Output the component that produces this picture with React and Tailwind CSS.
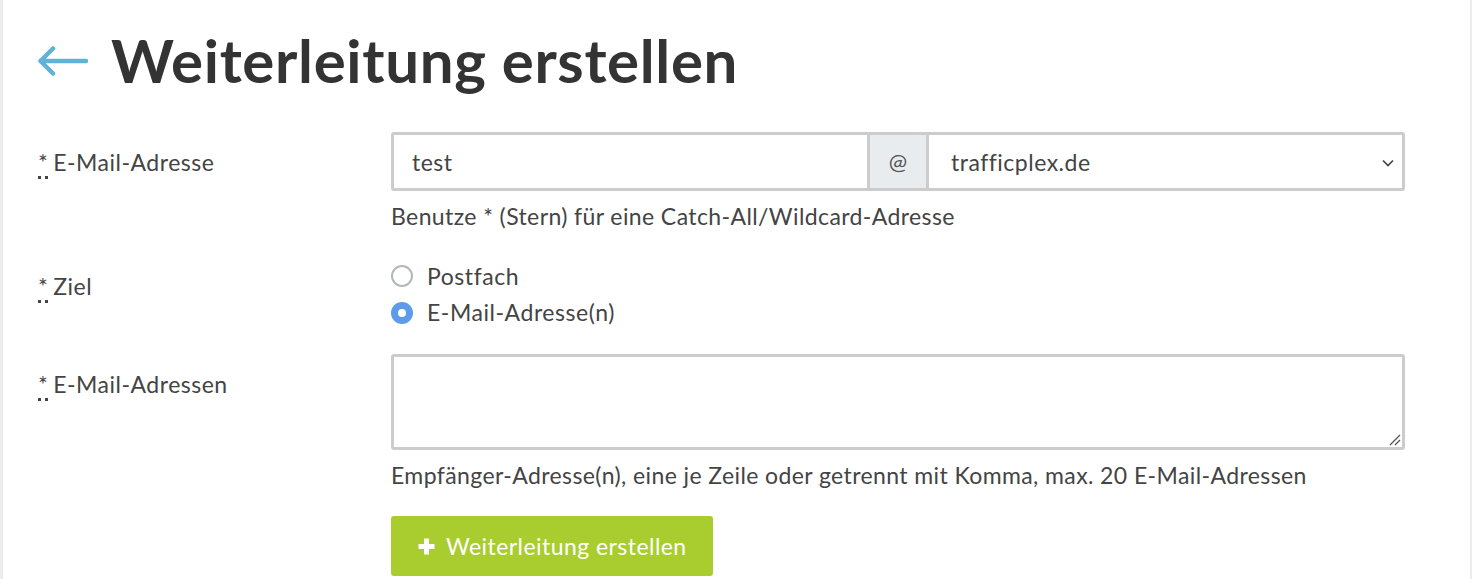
import React from "react";

function Req() {
  return (
    <abbr
      title="Pflichtfeld"
      className="border-b-[3px] border-dotted border-[#444] mr-[5px] leading-none"
      style={{ textDecoration: "none" }}
    >
      *
    </abbr>
  );
}

function Label({ children }) {
  return (
    <div className="w-[353px] shrink-0 pt-[14px] text-[23px] tracking-[0.5px] leading-[33px] text-[#444]">
      <Req />
      {children}
    </div>
  );
}

export default function App() {
  return (
    <div
      className="w-[1472px] h-[579px] overflow-hidden bg-white border-l-[3px] border-r-2 border-[#ececec] text-[#444]"
      style={{ fontFamily: "Lato, 'Noto Sans', sans-serif" }}
    >
      <div className="w-[1467px] pl-[35px]">
        <div className="flex items-center pt-[24px] h-[96px]">
          <svg width="50" height="34" viewBox="0 0 50 34" className="mr-[23px] mt-[2px]">
            <path
              d="M48 17 H2.5 M15 4.5 L2.5 17 L15 29.5"
              fill="none"
              stroke="#62b2d8"
              strokeWidth="4.5"
              strokeLinecap="round"
              strokeLinejoin="round"
            />
          </svg>
          <h1 className="text-[60px] leading-[72px] font-bold text-[#333] tracking-[0.65px]">
            Weiterleitung erstellen
          </h1>
        </div>

        <div className="mt-[36px] flex">
          <Label>E-Mail-Adresse</Label>
          <div className="w-[1014px]">
            <div className="flex h-[59px] border-[3px] border-[#ccc] rounded-[3px] text-[23px] tracking-[0.5px] text-[#444]">
              <div className="w-[473px] pl-[18px] pt-[2px] flex items-center">test</div>
              <div className="w-[62px] bg-[#e9ecef] border-x-[3px] border-[#ccc] flex items-center justify-center text-[22px] tracking-normal text-[#555]">
                @
              </div>
              <div className="flex-1 pl-[22px] pt-[2px] pr-[7px] flex items-center justify-between">
                <span>trafficplex.de</span>
                <svg width="14" height="10" viewBox="0 0 14 10">
                  <path d="M2 2.5 L7 7.5 L12 2.5" fill="none" stroke="#444" strokeWidth="1.7" />
                </svg>
              </div>
            </div>
            <div className="mt-[9px] text-[23px] tracking-[0.4px] leading-[33px] text-[#444]">
              Benutze * (Stern) für eine Catch-All/Wildcard-Adresse
            </div>
          </div>
        </div>

        <div className="mt-[24px] flex">
          <div className="w-[353px] shrink-0 pt-[13px] text-[23px] tracking-[0.5px] leading-[33px] text-[#444]">
            <Req />
            Ziel
          </div>
          <div className="w-[1014px] text-[23px] tracking-[0.55px] text-[#444]">
            <div className="flex items-center h-[37px] pt-[1px]">
              <span className="w-[22px] h-[22px] rounded-full border-2 border-[#b3b8bd] bg-white mr-[14px]"></span>
              Postfach
            </div>
            <div className="flex items-center h-[37px]">
              <span className="w-[22px] h-[22px] rounded-full bg-[#5d9ce8] mr-[14px] flex items-center justify-center">
                <span className="w-[8px] h-[8px] rounded-full bg-white"></span>
              </span>
              E-Mail-Adresse(n)
            </div>
          </div>
        </div>

        <div className="mt-[23px] flex">
          <Label>E-Mail-Adressen</Label>
          <div className="w-[1014px]">
            <div className="relative h-[96px] border-[3px] border-[#ccc] rounded-[3px]">
              <svg width="12" height="12" viewBox="0 0 12 12" className="absolute right-[1px] bottom-[1px]">
                <path d="M11 1 L1 11 M11 6 L6 11" stroke="#555" strokeWidth="1.3" />
              </svg>
            </div>
            <div className="mt-[9px] text-[23px] tracking-[0.4px] leading-[33px] text-[#444]">
              Empfänger-Adresse(n), eine je Zeile oder getrennt mit Komma, max. 20 E-Mail-Adressen
            </div>
            <button className="mt-[24px] h-[60px] px-[26px] bg-[#a9cd2f] rounded-[3px] text-white text-[23px] tracking-[0.45px] flex items-center">
              <svg width="19" height="19" viewBox="0 0 19 19" className="mr-[10px]">
                <path d="M9.5 1.5 V17.5 M1.5 9.5 H17.5" stroke="white" strokeWidth="5" />
              </svg>
              Weiterleitung erstellen
            </button>
          </div>
        </div>
      </div>
    </div>
  );
}
